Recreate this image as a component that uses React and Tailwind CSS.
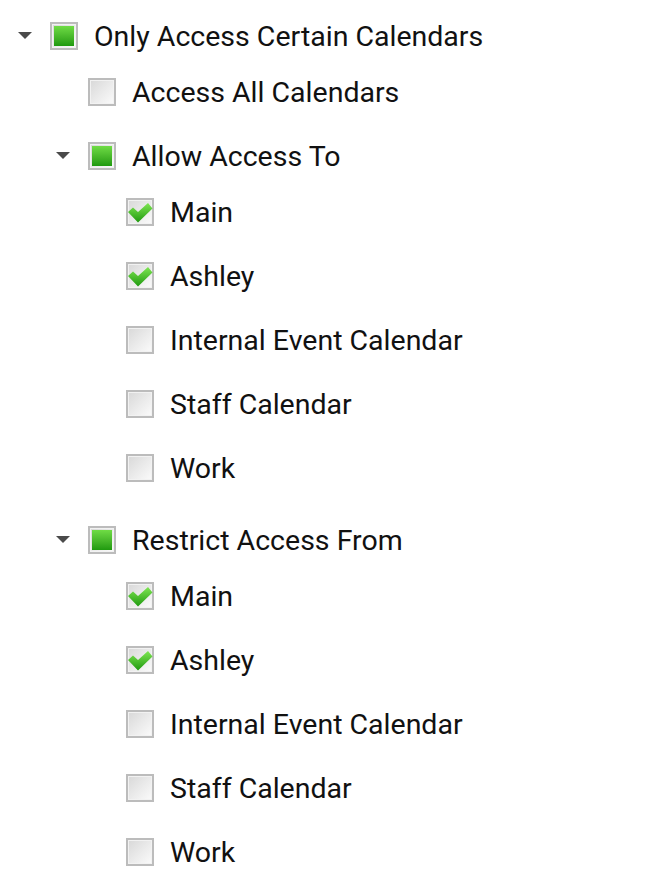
import { useState } from "react";

const calendars = ["Main", "Ashley", "Internal Event Calendar", "Staff Calendar", "Work"];

const tree = {
  label: "Only Access Certain Calendars",
  state: "partial",
  children: [
    { label: "Access All Calendars", state: "off" },
    {
      label: "Allow Access To",
      state: "partial",
      children: calendars.map((c, i) => ({ label: c, state: i < 2 ? "on" : "off" })),
    },
    {
      label: "Restrict Access From",
      state: "partial",
      children: calendars.map((c, i) => ({ label: c, state: i < 2 ? "on" : "off" })),
    },
  ],
};

const Box = ({ state }) => (
  <div className="relative w-[28px] h-[28px] shrink-0 border-2 border-[#bcbcbc] bg-gradient-to-br from-[#d8d8d8] via-[#eaeaea] to-[#fbfbfb] shadow-[inset_0_0_0_1px_#f2f2f2]">
    {state === "partial" && (
      <div className="absolute left-[2px] top-[2px] right-[2px] bottom-[2px] bg-gradient-to-b from-[#6fdc45] to-[#1e9a0e]" />
    )}
    {state === "on" && (
      <svg className="absolute left-[-1px] top-[1px]" width="26" height="23" viewBox="0 0 26 23">
        <defs>
          <linearGradient id="chk" x1="0" y1="0" x2="0" y2="1">
            <stop offset="0" stopColor="#7fe653" />
            <stop offset="1" stopColor="#1f990f" />
          </linearGradient>
        </defs>
        <path d="M1 11 L6 6.5 L11 11 L21 2 L25.5 7.5 L11 21.5 Z" fill="url(#chk)" />
      </svg>
    )}
  </div>
);

const Node = ({ node }) => {
  const [open, setOpen] = useState(true);
  const hasKids = !!node.children;
  return (
    <div className="flex flex-col">
      <div className="flex items-center h-[56px]">
        <div className="w-[38px] shrink-0 flex items-center">
          {hasKids && (
            <button onClick={() => setOpen(!open)} className="ml-[6px] w-[14px] h-[8px]">
              <svg width="14" height="8" viewBox="0 0 14 8">
                <path d="M0 0 H14 L7 7 Z" fill="#4a4a4a" />
              </svg>
            </button>
          )}
        </div>
        <Box state={node.state} />
        <span className="ml-[16px] mt-[2px] text-[28.5px] leading-none text-[#111] whitespace-nowrap">{node.label}</span>
      </div>
      {hasKids && open && (
        <div className="flex flex-col gap-2 pl-[38px] mb-2">
          {node.children.map((c) => (
            <Node key={c.label} node={c} />
          ))}
        </div>
      )}
    </div>
  );
};

export default function App() {
  return (
    <div className="w-[668px] h-[888px] bg-white pt-2 pl-[12px] overflow-hidden font-['Roboto',sans-serif]">
      <Node node={tree} />
    </div>
  );
}
